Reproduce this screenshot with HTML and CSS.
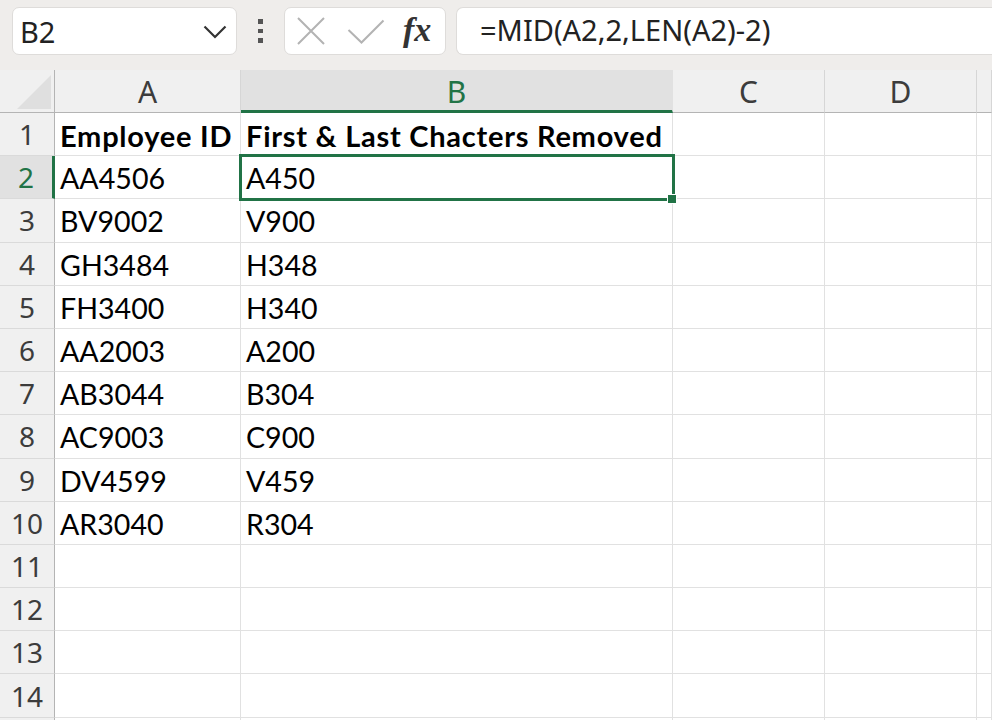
FILE: index.html
```html
<!DOCTYPE html>
<html>
<head>
<meta charset="utf-8">
<link rel="stylesheet" href="styles.css">
</head>
<body>
<div class="toolbar">
  <div class="namebox">
    <span class="nb-text">B2</span>
    <svg class="chev" width="24" height="14" viewBox="0 0 24 14"><path d="M1.5 1.5 L12 12 L22.5 1.5" fill="none" stroke="#333" stroke-width="2.2"/></svg>
  </div>
  <div class="dots"><span></span><span></span><span></span></div>
  <div class="fxbox">
    <svg class="ic-x" width="30" height="30" viewBox="0 0 30 30"><path d="M2 2 L28 28 M28 2 L2 28" stroke="#b3b3b3" stroke-width="2"/></svg>
    <svg class="ic-check" width="38" height="26" viewBox="0 0 38 26"><path d="M1.5 11 L14.5 23.5 L36.5 1.5" fill="none" stroke="#b3b3b3" stroke-width="2"/></svg>
    <span class="fx">fx</span>
  </div>
  <div class="formula">=MID(A2,2,LEN(A2)-2)</div>
</div>
<div class="sheet">
  <div class="ch corner"><span class="tri"></span></div>
  <div class="ch">A</div>
  <div class="ch sel">B</div>
  <div class="ch">C</div>
  <div class="ch">D</div>
  <div class="ch last"></div>

  <div class="rh">1</div><div class="c b">Employee ID</div><div class="c b">First &amp; Last Chacters Removed</div><div class="c"></div><div class="c"></div><div class="c"></div>
  <div class="rh sel">2</div><div class="c">AA4506</div><div class="c active">A450<span class="selbox"></span><span class="handle"></span></div><div class="c"></div><div class="c"></div><div class="c"></div>
  <div class="rh">3</div><div class="c">BV9002</div><div class="c">V900</div><div class="c"></div><div class="c"></div><div class="c"></div>
  <div class="rh">4</div><div class="c">GH3484</div><div class="c">H348</div><div class="c"></div><div class="c"></div><div class="c"></div>
  <div class="rh">5</div><div class="c">FH3400</div><div class="c">H340</div><div class="c"></div><div class="c"></div><div class="c"></div>
  <div class="rh">6</div><div class="c">AA2003</div><div class="c">A200</div><div class="c"></div><div class="c"></div><div class="c"></div>
  <div class="rh">7</div><div class="c">AB3044</div><div class="c">B304</div><div class="c"></div><div class="c"></div><div class="c"></div>
  <div class="rh">8</div><div class="c">AC9003</div><div class="c">C900</div><div class="c"></div><div class="c"></div><div class="c"></div>
  <div class="rh">9</div><div class="c">DV4599</div><div class="c">V459</div><div class="c"></div><div class="c"></div><div class="c"></div>
  <div class="rh">10</div><div class="c">AR3040</div><div class="c">R304</div><div class="c"></div><div class="c"></div><div class="c"></div>
  <div class="rh">11</div><div class="c"></div><div class="c"></div><div class="c"></div><div class="c"></div><div class="c"></div>
  <div class="rh">12</div><div class="c"></div><div class="c"></div><div class="c"></div><div class="c"></div><div class="c"></div>
  <div class="rh">13</div><div class="c"></div><div class="c"></div><div class="c"></div><div class="c"></div><div class="c"></div>
  <div class="rh">14</div><div class="c"></div><div class="c"></div><div class="c"></div><div class="c"></div><div class="c"></div>
  <div class="rh"></div><div class="c"></div><div class="c"></div><div class="c"></div><div class="c"></div><div class="c"></div>
</div>
</body>
</html>
```
FILE: styles.css
```css
html, body {
  margin: 0;
  padding: 0;
  width: 992px;
  height: 720px;
  overflow: hidden;
  background: #ffffff;
}
.toolbar {
  height: 70px;
  box-sizing: border-box;
  background: #efedeb;
  display: flex;
  align-items: flex-start;
  padding: 7px 0 0 12px;
  font-family: "Noto Sans", "Open Sans", sans-serif;
  color: #222;
}
.namebox {
  width: 225px;
  height: 48px;
  box-sizing: border-box;
  background: #fff;
  border: 1px solid #dedcda;
  border-radius: 7px;
  display: flex;
  align-items: center;
  justify-content: space-between;
  padding: 0 9px 0 7px;
}
.nb-text {
  font-size: 29px;
  line-height: 1;
  color: #222;
}
.chev { display: block; margin-top: 2px; }
.dots {
  width: 47px;
  height: 48px;
  display: flex;
  flex-direction: column;
  align-items: center;
  justify-content: center;
  gap: 5px;
}
.dots span {
  display: block;
  width: 5px;
  height: 4.5px;
  background: #555;
}
.fxbox {
  width: 162px;
  height: 48px;
  box-sizing: border-box;
  background: #fff;
  border: 1px solid #dedcda;
  border-radius: 7px;
  display: flex;
  align-items: center;
  padding-left: 11px;
}
.ic-x { display: block; margin-right: 21px; }
.ic-check { display: block; margin-right: 18px; margin-top: 1px; }
.fx {
  font-family: "Liberation Serif", "DejaVu Serif", serif;
  font-style: italic;
  font-weight: bold;
  font-size: 34px;
  line-height: 1;
  color: #333;
  margin-top: -2px;
}
.formula {
  margin-left: 10px;
  flex: 1;
  height: 48px;
  box-sizing: border-box;
  background: #fff;
  border: 1px solid #dedcda;
  border-right: none;
  border-radius: 7px 0 0 7px;
  padding-left: 23px;
  font-size: 29px;
  line-height: 44px;
  color: #222;
  white-space: nowrap;
}
.sheet {
  display: grid;
  grid-template-columns: 55px 186px 432px 152px 152px 1fr;
  grid-template-rows: 43px;
  grid-auto-rows: 43.2px;
}
.ch, .rh {
  background: #f0f0f0;
  font-family: "Noto Sans", "Open Sans", sans-serif;
  color: #3c3c3c;
  display: flex;
  align-items: center;
  justify-content: center;
  box-sizing: border-box;
}
.ch {
  font-size: 30px;
  border-right: 1px solid #d6d6d6;
  border-bottom: 1px solid #b4b4b4;
  padding-top: 1px;
}
.ch.corner {
  position: relative;
  border-right: 1px solid #b4b4b4;
}
.tri {
  position: absolute;
  left: 17px;
  top: 5px;
  width: 34px;
  height: 34px;
  background: #dfdfdf;
  clip-path: polygon(100% 0, 100% 100%, 0 100%);
}
.ch.sel {
  background: #e1e1e1;
  color: #217346;
  border-bottom: 3px solid #217346;
  border-right-color: #e1e1e1;
  padding-top: 3px;
}
.rh {
  font-size: 28px;
  border-right: 1px solid #b4b4b4;
  border-bottom: 1px solid #dadada;
}
.rh.sel {
  background: #e1e1e1;
  color: #217346;
  border-right: 3px solid #217346;
}
.c {
  box-sizing: border-box;
  border-right: 1px solid #e1e1e1;
  border-bottom: 1px solid #e1e1e1;
  font-family: Lato, "Liberation Sans", sans-serif;
  font-size: 28.6px;
  color: #000;
  display: flex;
  align-items: center;
  padding: 2px 0 0 5px;
  white-space: nowrap;
}
.c.b {
  font-weight: bold;
  font-size: 29px;
  letter-spacing: 0.75px;
}
.c.active { position: relative; }
.selbox {
  position: absolute;
  left: -2px;
  top: -2px;
  right: -3px;
  bottom: -3px;
  border: 3px solid #217346;
  pointer-events: none;
}
.handle {
  position: absolute;
  left: 426px;
  top: 38px;
  width: 8px;
  height: 8px;
  background: #217346;
  border: 1px solid #fff;
}
```
